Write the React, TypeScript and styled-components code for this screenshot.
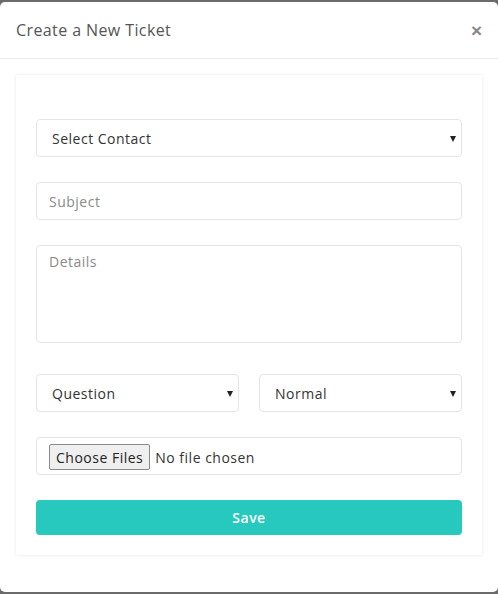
import React from "react";
import styled, { createGlobalStyle } from "styled-components";

const GlobalStyle = createGlobalStyle`
  html, body {
    margin: 0;
    padding: 0;
    background: #6b6b6b;
    font-family: "Open Sans", "Liberation Sans", sans-serif;
    letter-spacing: 0.5px;
  }
  * { box-sizing: border-box; }
`;

const Modal = styled.div`
  margin: 2px 0 0 0;
  width: 498px;
  height: 590px;
  background: #fff;
  border-radius: 5px;
  overflow: hidden;
`;

const Header = styled.div`
  height: 57px;
  display: flex;
  align-items: center;
  justify-content: space-between;
  padding: 0 16px;
  border-bottom: 1px solid #e9ecef;
`;

const Title = styled.h5`
  margin: 0;
  font-size: 16px;
  font-weight: 400;
  color: #555;
  letter-spacing: 0.4px;
`;

const Close = styled.button`
  border: 0;
  background: none;
  padding: 0;
  color: #888;
  font-size: 19px;
  font-weight: 700;
  line-height: 1;
  cursor: pointer;
`;

const Body = styled.div`
  padding: 16px 16px 0 16px;
`;

const Card = styled.form`
  background: #fff;
  box-shadow: 0 0 3px rgba(0, 0, 0, 0.1);
  padding: 44px 20px 20px 20px;
  display: flex;
  flex-direction: column;
`;

const Field = styled.div<{ $gap?: number }>`
  margin-bottom: ${(p) => p.$gap ?? 25}px;
`;

const Row = styled.div`
  display: grid;
  grid-template-columns: 1fr 1fr;
  gap: 20px;
  margin-bottom: 25px;
`;

const SelectWrap = styled.div`
  position: relative;
  &::after {
    content: "";
    position: absolute;
    right: 6px;
    top: 17px;
    border-left: 3.5px solid transparent;
    border-right: 3.5px solid transparent;
    border-top: 6px solid #222;
    pointer-events: none;
  }
`;

const Select = styled.select`
  appearance: none;
  width: 100%;
  height: 38px;
  padding: 0 12px 0 15px;
  border: 1px solid #e5e5e5;
  border-radius: 4px;
  background: #fff;
  font-family: inherit;
  letter-spacing: inherit;
  font-size: 14px;
  color: #333;
  outline: none;
`;

const Input = styled.input`
  width: 100%;
  height: 38px;
  padding: 0 12px;
  border: 1px solid #e5e5e5;
  border-radius: 4px;
  font-family: inherit;
  letter-spacing: inherit;
  font-size: 14px;
  color: #333;
  outline: none;
  &::placeholder { color: #8a8a8a; }
`;

const TextArea = styled.textarea`
  display: block;
  width: 100%;
  height: 98px;
  padding: 6px 12px;
  border: 1px solid #e5e5e5;
  border-radius: 4px;
  font-family: inherit;
  letter-spacing: inherit;
  font-size: 14px;
  resize: none;
  outline: none;
  &::placeholder { color: #8a8a8a; }
`;

const FileInput = styled.input`
  width: 100%;
  height: 38px;
  padding: 6px 12px;
  border: 1px solid #e5e5e5;
  border-radius: 4px;
  font-family: inherit;
  letter-spacing: inherit;
  font-size: 14px;
  color: #333;
  &::file-selector-button {
    font-family: inherit;
    letter-spacing: inherit;
    font-size: 14px;
    color: #222;
    background: #efefef;
    border: 1px solid #8a8a8a;
    border-radius: 2px;
    height: 26px;
    padding: 0 6px;
    margin-right: 5px;
  }
`;

const SaveButton = styled.button`
  height: 35px;
  border: 0;
  border-radius: 4px;
  background: #27c8be;
  color: #fff;
  font-family: inherit;
  letter-spacing: inherit;
  font-size: 14px;
  font-weight: 600;
  cursor: pointer;
`;

export default function App() {
  return (
    <>
      <GlobalStyle />
      <Modal>
        <Header>
          <Title>Create a New Ticket</Title>
          <Close aria-label="Close">×</Close>
        </Header>
        <Body>
          <Card onSubmit={(e) => e.preventDefault()}>
            <Field>
              <SelectWrap>
                <Select defaultValue="">
                  <option value="">Select Contact</option>
                </Select>
              </SelectWrap>
            </Field>
            <Field>
              <Input placeholder="Subject" />
            </Field>
            <Field $gap={31}>
              <TextArea placeholder="Details" />
            </Field>
            <Row>
              <SelectWrap>
                <Select defaultValue="question">
                  <option value="question">Question</option>
                  <option value="problem">Problem</option>
                </Select>
              </SelectWrap>
              <SelectWrap>
                <Select defaultValue="normal">
                  <option value="normal">Normal</option>
                  <option value="high">High</option>
                </Select>
              </SelectWrap>
            </Row>
            <Field>
              <FileInput type="file" multiple />
            </Field>
            <SaveButton type="submit">Save</SaveButton>
          </Card>
        </Body>
      </Modal>
    </>
  );
}
